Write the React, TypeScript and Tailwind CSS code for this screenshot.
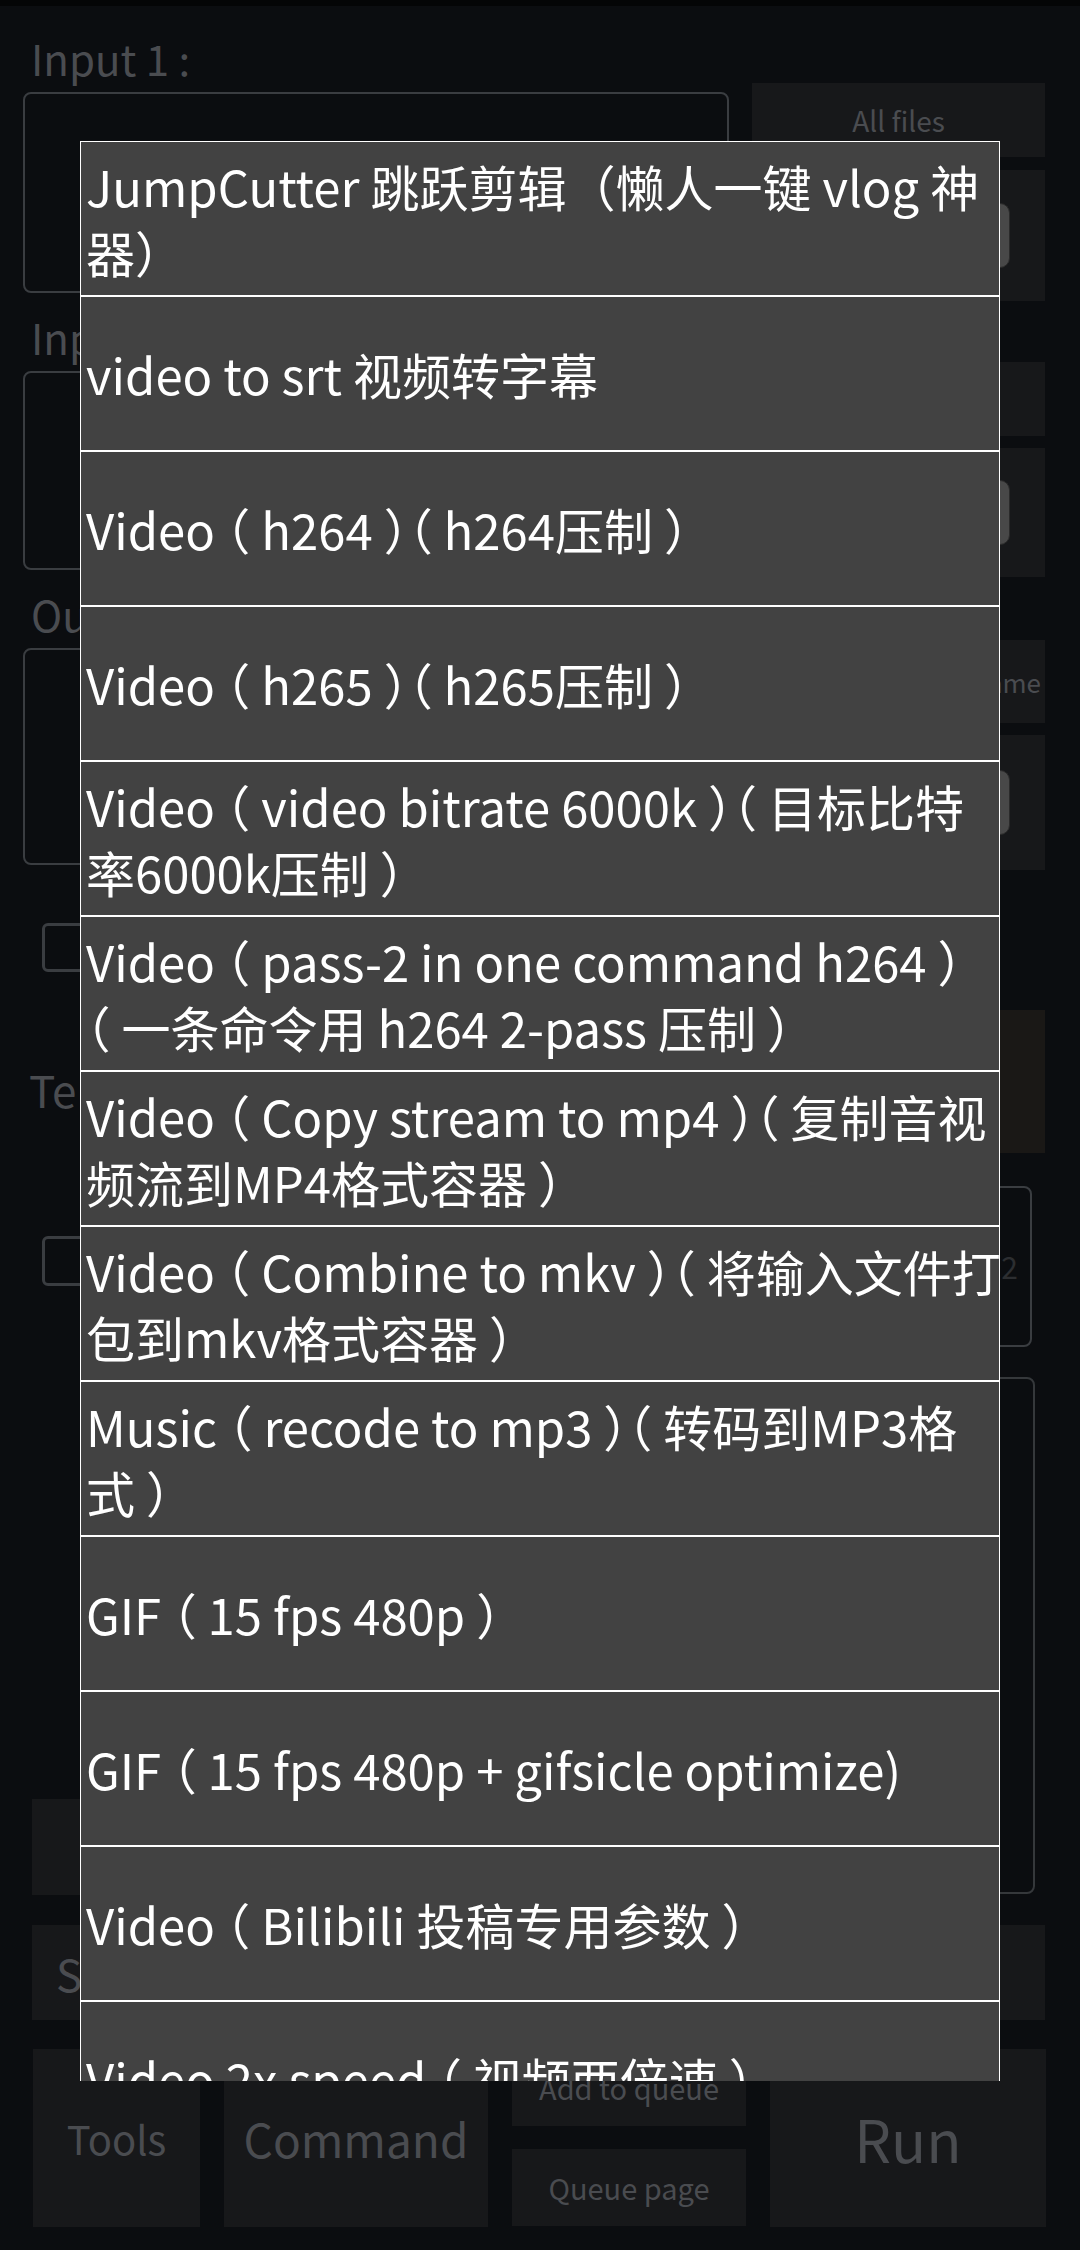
const items: string[][] = [
  ['JumpCutter 跳跃剪辑（懒人一键 vlog 神', '器）'],
  ['video to srt 视频转字幕'],
  ['Video （ h264 ）（ h264压制 ）'],
  ['Video （ h265 ）（ h265压制 ）'],
  ['Video （ video bitrate 6000k ）（ 目标比特', '率6000k压制 ）'],
  ['Video （ pass-2 in one command h264 ）', '（ 一条命令用 h264 2-pass 压制 ）'],
  ['Video （ Copy stream to mp4 ）（ 复制音视', '频流到MP4格式容器 ）'],
  ['Video （ Combine to mkv ）（ 将输入文件打', '包到mkv格式容器 ）'],
  ['Music （ recode to mp3 ）（ 转码到MP3格', '式 ）'],
  ['GIF （ 15 fps 480p ）'],
  ['GIF （ 15 fps 480p + gifsicle optimize)'],
  ['Video （ Bilibili 投稿专用参数 ）'],
  ['Video 2x speed （ 视频两倍速 ）'],
];

function Btn({ h, children, className = '' }: { h: string; children?: React.ReactNode; className?: string }) {
  return (
    <div className={`${h} bg-[#17181a] flex items-center justify-center text-[#4a4c50] ${className}`}>
      {children}
    </div>
  );
}

function PillBtn({ h }: { h: string }) {
  return (
    <div className={`${h} bg-[#17181a] flex items-center justify-end pr-[35px]`}>
      <div className="w-[230px] h-[65px] rounded-[10px] bg-[#484848] border border-[#2a2a2a]" />
    </div>
  );
}

export default function App() {
  return (
    <div className="relative w-[1080px] h-[2250px] overflow-hidden bg-[#0b0d10] font-['Noto_Sans_CJK_SC','Noto_Sans',sans-serif]">
      <div className="h-[6px] bg-[#040506]" />

      {/* background screen (dimmed) */}
      <div className="flex gap-[23px] pl-[23px] pr-[35px]">
        <div className="w-[706px] flex flex-col text-[#4a4c50]">
          <div className="mt-[28px] h-[48px] pl-[8px] text-[42px] leading-[48px]">Input 1 :</div>
          <div className="mt-[10px] h-[201px] rounded-[8px] border-2 border-[#3a3d41]" />
          <div className="mt-[20px] h-[48px] pl-[8px] text-[42px] leading-[48px]">Input 2 :</div>
          <div className="mt-[10px] h-[199px] rounded-[8px] border-2 border-[#3a3d41]" />
          <div className="mt-[20px] h-[48px] pl-[8px] text-[42px] leading-[48px]">Output :</div>
          <div className="mt-[10px] h-[217px] rounded-[8px] border-2 border-[#3a3d41]" />
        </div>
        <div className="w-[293px] flex flex-col">
          <Btn h="mt-[77px] h-[74px]" className="text-[28px]">All files</Btn>
          <div className="mt-[13px]"><PillBtn h="h-[131px]" /></div>
          <Btn h="mt-[61px] h-[74px]" className="text-[28px]">All files</Btn>
          <div className="mt-[12px]"><PillBtn h="h-[129px]" /></div>
          <Btn h="mt-[63px] h-[83px]" className="text-[26px] !justify-end pr-[4px] whitespace-nowrap">Default file name</Btn>
          <div className="mt-[12px]"><PillBtn h="h-[135px]" /></div>
        </div>
      </div>

      <div className="flex gap-[23px] pl-[23px] pr-[35px]">
        <div className="w-[706px] flex flex-col text-[#4a4c50]">
          <div className="mt-[53px] ml-[19px] w-[48px] h-[49px] rounded-[6px] border-[3px] border-[#3a3d41]" />
          <div className="mt-[93px] h-[48px] pl-[6px] text-[44px] leading-[48px]">Template :</div>
          <div className="mt-[123px] ml-[19px] w-[48px] h-[50px] rounded-[6px] border-[3px] border-[#3a3d41]" />
          <div className="mt-[513px] ml-[9px] w-[330px] h-[96px] bg-[#17181a]" />
        </div>
        <div className="w-[293px] flex flex-col">
          <div className="mt-[140px] h-[143px] bg-[#1a1816]" />
          <div className="mt-[33px] mr-[13px] h-[161px] rounded-[8px] border-2 border-[#3a3d41] flex items-center justify-end pr-[12px] text-[30px] text-[#2c2e31]">2</div>
          <div className="mt-[30px] mr-[10px] h-[517px] rounded-[8px] border-2 border-[#35383b]" />
        </div>
      </div>

      <div className="mt-[30px] ml-[32px] mr-[35px] h-[95px] bg-[#17181a] flex items-center pl-[24px] text-[44px] leading-[50px] text-[#4a4c50]">
        Save preset
      </div>

      <div className="mt-[29px] ml-[33px] mr-[34px] h-[178px] flex gap-[24px] text-[#4a4c50]">
        <Btn h="w-[167px] h-full" className="text-[40px]">Tools</Btn>
        <Btn h="w-[264px] h-full" className="text-[46px]">Command</Btn>
        <div className="w-[234px] flex flex-col gap-[23px]">
          <Btn h="h-[77px]" className="text-[29px]">Add to queue</Btn>
          <Btn h="h-[77px]" className="text-[29px]">Queue page</Btn>
        </div>
        <Btn h="flex-1 h-full" className="text-[58px]">Run</Btn>
      </div>

      {/* selection dialog */}
      <div className="absolute left-[80px] top-[141px] w-[920px] h-[1940px] overflow-hidden border-x border-t border-white bg-[#424242]">
        {items.map((lines, i) => (
          <div
            key={i}
            className={`h-[155px] border-b-2 border-white bg-[#424242] flex flex-col justify-center pl-[5px] text-white text-[49px] leading-[66px] ${
              i === 0 ? '' : "[font-feature-settings:'halt']"
            }`}
          >
            {lines.map((l, j) => (
              <div key={j} className="whitespace-nowrap">{l}</div>
            ))}
          </div>
        ))}
      </div>
    </div>
  );
}
